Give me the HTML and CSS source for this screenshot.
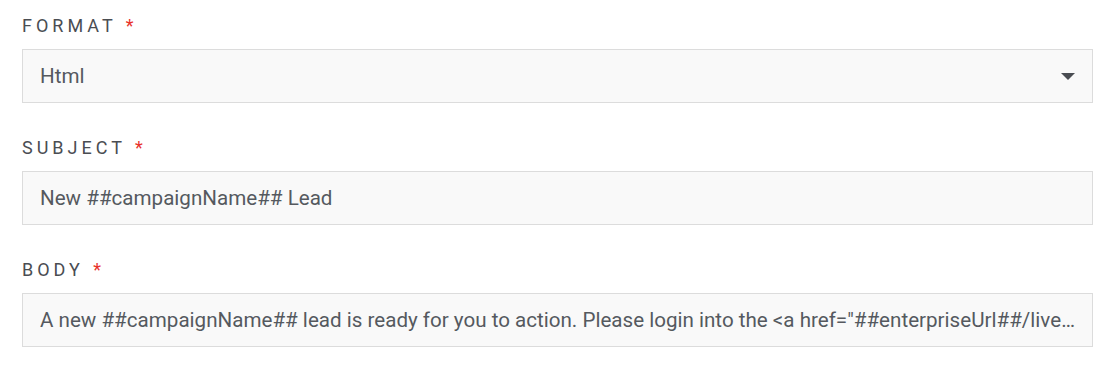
FILE: index.html
```html
<!DOCTYPE html>
<html>
<head>
<meta charset="utf-8">
<link rel="stylesheet" href="styles.css">
</head>
<body>
<form class="form">
  <div class="field">
    <div class="label">FORMAT <span class="req">*</span></div>
    <div class="input select">
      <span class="value">Html</span>
      <span class="caret"></span>
    </div>
  </div>
  <div class="field">
    <div class="label">SUBJECT <span class="req">*</span></div>
    <div class="input"><span class="value">New ##campaignName## Lead</span></div>
  </div>
  <div class="field">
    <div class="label">BODY <span class="req">*</span></div>
    <div class="input"><span class="value">A new ##campaignName## lead is ready for you to action. Please login into the &lt;a href="##enterpriseUrl##/live/leads"&gt;Enterprise Portal&lt;/a&gt; to view the lead details.</span></div>
  </div>
</form>
</body>
</html>
```
FILE: styles.css
```css
html, body {
  margin: 0;
  padding: 0;
  background: #ffffff;
}
body {
  font-family: Roboto, "Noto Sans", sans-serif;
}
.form {
  padding: 16px 27px 0 22px;
  display: flex;
  flex-direction: column;
  gap: 35px;
}
.field {
  display: flex;
  flex-direction: column;
  gap: 13px;
}
.label {
  font-size: 18px;
  line-height: 20px;
  letter-spacing: 4px;
  color: #4a4d52;
  font-weight: 400;
}
.req {
  color: #e8322b;
  margin-left: 1px;
}
.input {
  box-sizing: border-box;
  height: 54px;
  border: 1px solid #dcdcdc;
  background: #f9f9f9;
  padding: 0 16px 0 17px;
  display: flex;
  align-items: center;
  font-size: 20.6px;
  font-weight: 400;
  color: #55595f;
  min-width: 0;
}
.value {
  flex: 1;
  min-width: 0;
  white-space: nowrap;
  overflow: hidden;
  text-overflow: ellipsis;
}
.caret {
  width: 0;
  height: 0;
  border-left: 7px solid transparent;
  border-right: 7px solid transparent;
  border-top: 7px solid #4a4d52;
  margin-right: 1px;
}
```
